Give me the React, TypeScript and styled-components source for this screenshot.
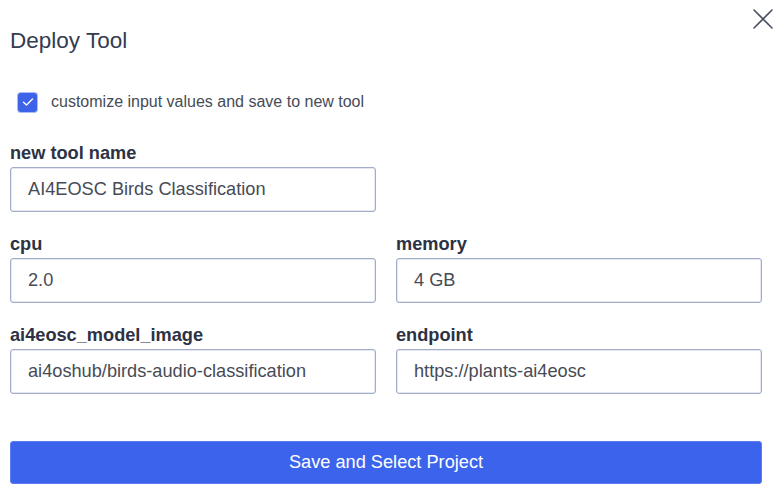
import React from "react";
import styled, { createGlobalStyle } from "styled-components";

const Global = createGlobalStyle`
  html, body { margin: 0; padding: 0; background: #ffffff; }
  body { font-family: "Liberation Sans", Arial, sans-serif; }
  * { box-sizing: border-box; }
`;

const Dialog = styled.div`
  position: relative;
  width: 781px;
  height: 493px;
  padding: 0 19px 0 10px;
  background: #ffffff;
  display: flex;
  flex-direction: column;
`;

const Title = styled.h2`
  margin: 0;
  padding-top: 28px;
  height: 92px;
  font-size: 22.5px;
  line-height: 26px;
  font-weight: 400;
  color: #343c50;
`;

const CloseButton = styled.button`
  position: absolute;
  top: 9px;
  right: 8px;
  width: 20px;
  height: 20px;
  padding: 0;
  border: none;
  background: transparent;
  display: flex;
  align-items: center;
  justify-content: center;
  cursor: pointer;
`;

const CheckRow = styled.label`
  display: flex;
  align-items: center;
  gap: 14px;
  padding-left: 8px;
  height: 20px;
  margin-bottom: 31px;
  font-size: 16px;
  color: #464b57;
`;

const Box = styled.span`
  width: 19px;
  height: 19px;
  border-radius: 3px;
  background: #3d63e9;
  box-shadow: 0 0 0 1px #a9bcf5;
  display: flex;
  align-items: center;
  justify-content: center;
`;

const Grid = styled.div`
  display: grid;
  grid-template-columns: 366px 366px;
  column-gap: 20px;
  row-gap: 22px;
`;

const Field = styled.div`
  display: flex;
  flex-direction: column;
  gap: 4px;
`;

const Label = styled.div`
  font-size: 18.2px;
  line-height: 20px;
  font-weight: 700;
  color: #2c3244;
`;

const Input = styled.div`
  height: 45px;
  border: 1px solid #a2adc9;
  border-radius: 3px;
  padding: 0 17px;
  display: flex;
  align-items: center;
  font-size: 18.2px;
  color: #474b55;
  box-shadow: inset 0 0 0 0.5px #c9d0e2;
`;

const SubmitButton = styled.button`
  margin-top: 47px;
  width: 752px;
  height: 43px;
  border: 1px solid #5c7ef0;
  border-radius: 3px;
  background: #3b63eb;
  color: #ffffff;
  font-family: "Liberation Sans", Arial, sans-serif;
  font-size: 18.2px;
  cursor: pointer;
`;

const fields = [
  { label: "cpu", value: "2.0" },
  { label: "memory", value: "4 GB" },
  { label: "ai4eosc_model_image", value: "ai4oshub/birds-audio-classification" },
  { label: "endpoint", value: "https://plants-ai4eosc" },
];

export default function App() {
  return (
    <>
      <Global />
      <Dialog>
        <Title>Deploy Tool</Title>
        <CloseButton aria-label="close">
          <svg width="20" height="20" viewBox="0 0 20 20">
            <path d="M1 1 L19 19 M19 1 L1 19" stroke="#4b5163" strokeWidth="1.6" strokeLinecap="round" />
          </svg>
        </CloseButton>
        <CheckRow>
          <Box>
            <svg width="12" height="10" viewBox="0 0 12 10">
              <path d="M1.5 5.2 L4.5 8 L10.5 2" fill="none" stroke="#ffffff" strokeWidth="1.4" strokeLinecap="round" strokeLinejoin="round" />
            </svg>
          </Box>
          customize input values and save to new tool
        </CheckRow>
        <Grid>
          <Field>
            <Label>new tool name</Label>
            <Input>AI4EOSC Birds Classification</Input>
          </Field>
          <div />
          {fields.map((f) => (
            <Field key={f.label}>
              <Label>{f.label}</Label>
              <Input>{f.value}</Input>
            </Field>
          ))}
        </Grid>
        <SubmitButton>Save and Select Project</SubmitButton>
      </Dialog>
    </>
  );
}
